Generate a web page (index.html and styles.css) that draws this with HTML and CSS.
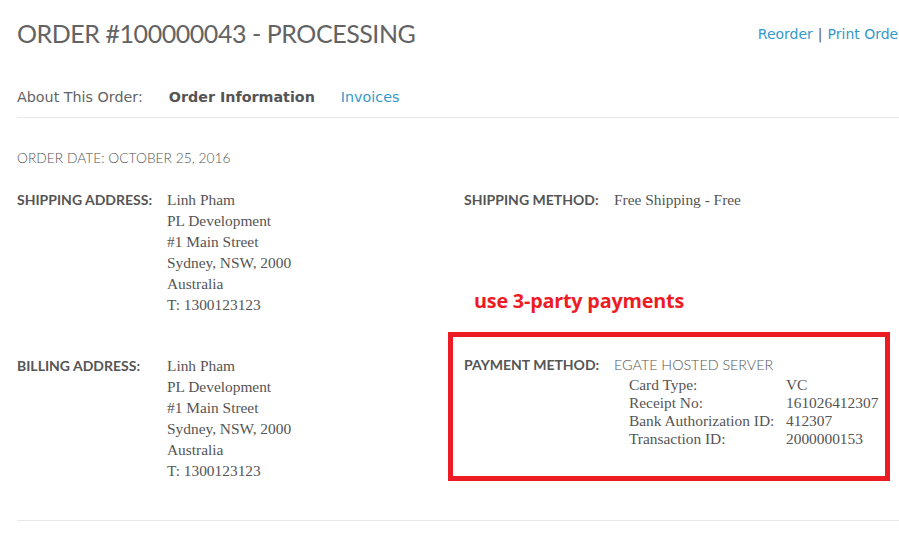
FILE: index.html
```html
<!DOCTYPE html>
<html>
<head>
<meta charset="utf-8">
<link rel="stylesheet" href="styles.css">
</head>
<body>
<div class="page">
  <div class="title-row">
    <h1 class="title">ORDER #100000043 - PROCESSING</h1>
    <div class="actions"><a class="link">Reorder</a><span class="sep">|</span><a class="link">Print Order</a></div>
  </div>
  <div class="tabs">
    <span class="tab-label">About This Order:</span>
    <span class="tab-current">Order Information</span>
    <a class="link tab-link">Invoices</a>
  </div>
  <div class="order-date">ORDER DATE: OCTOBER 25, 2016</div>
  <div class="row row-first">
    <div class="col">
      <div class="label">SHIPPING ADDRESS:</div>
      <address class="value">Linh Pham<br>PL Development<br>#1 Main Street<br>Sydney, NSW, 2000<br>Australia<br>T: 1300123123</address>
    </div>
    <div class="col col-right">
      <div class="pair">
        <div class="label">SHIPPING METHOD:</div>
        <div class="value">Free Shipping - Free</div>
      </div>
      <div class="note">use 3-party payments</div>
    </div>
  </div>
  <div class="row row-second">
    <div class="col col-billing">
      <div class="label">BILLING ADDRESS:</div>
      <address class="value">Linh Pham<br>PL Development<br>#1 Main Street<br>Sydney, NSW, 2000<br>Australia<br>T: 1300123123</address>
    </div>
    <div class="col col-right">
      <div class="payment-box">
        <div class="label">PAYMENT METHOD:</div>
        <div class="payment">
          <div class="method">EGATE HOSTED SERVER</div>
          <table class="details">
            <tr><th>Card Type:</th><td>VC</td></tr>
            <tr><th>Receipt No:</th><td>161026412307</td></tr>
            <tr><th>Bank Authorization ID:</th><td>412307</td></tr>
            <tr><th>Transaction ID:</th><td>2000000153</td></tr>
          </table>
        </div>
      </div>
    </div>
  </div>
  <div class="bottom-rule"></div>
</div>
</body>
</html>
```
FILE: styles.css
```css
html, body {
  margin: 0;
  padding: 0;
  background: #fff;
  overflow: hidden;
}
.page {
  width: 892px;
  margin-left: 17px;
  color: #636363;
}
.title-row {
  display: flex;
  justify-content: space-between;
  align-items: flex-start;
  padding-top: 16px;
}
.title {
  margin: 0;
  font-family: "Lato", sans-serif;
  font-weight: 400;
  font-size: 25px;
  line-height: 34px;
  color: #636363;
  letter-spacing: -0.45px;
}
.actions {
  margin-top: 8px;
  margin-right: 5px;
  font-family: "DejaVu Sans", Verdana, sans-serif;
  font-size: 14px;
  line-height: 20px;
  white-space: nowrap;
}
.link {
  color: #3399cc;
  text-decoration: none;
}
.sep {
  color: #636363;
  margin: 0 5px;
}
.tabs {
  margin-top: 37px;
  font-family: "DejaVu Sans", Verdana, sans-serif;
  font-size: 14.3px;
  line-height: 20px;
  padding-bottom: 10px;
  border-bottom: 1px solid #e6e6e6;
  display: flex;
  gap: 26px;
}
.tab-current {
  font-weight: bold;
  color: #555;
}
.order-date {
  margin-top: 31px;
  font-family: "Lato", sans-serif;
  font-weight: 300;
  font-size: 13.8px;
  line-height: 18px;
  color: #555;
}
.row {
  display: flex;
}
.row-first {
  margin-top: 22px;
}
.col {
  width: 447px;
  flex: none;
  display: flex;
  align-items: flex-start;
}
.col-right {
  flex-direction: column;
}
.pair {
  display: flex;
}
.label {
  width: 150px;
  flex: none;
  font-family: "Lato", sans-serif;
  font-weight: 700;
  font-size: 14px;
  line-height: 21px;
  color: #555;
}
.value {
  font-family: "Liberation Serif", serif;
  font-style: normal;
  font-size: 15.4px;
  line-height: 21px;
  color: #555;
}
.note {
  margin-top: 78px;
  margin-left: 10px;
  font-family: "Open Sans", sans-serif;
  font-weight: 700;
  font-size: 19.8px;
  line-height: 26px;
  letter-spacing: -0.2px;
  color: #ed1c24;
}
.row-second {
  margin-top: 17px;
}
.col-billing {
  margin-top: 23px;
}
.payment-box {
  box-sizing: border-box;
  display: flex;
  margin-left: -16px;
  width: 442px;
  border: 5px solid #ed1c24;
  padding: 17px 0 28px 11px;
}
.method {
  font-family: "Lato", sans-serif;
  font-weight: 300;
  font-size: 14.3px;
  line-height: 22px;
  color: #555;
}
.details {
  border-collapse: collapse;
  margin-left: 15px;
  font-family: "Liberation Serif", serif;
  font-size: 15.4px;
  color: #555;
}
.details th, .details td {
  padding: 0;
  line-height: 18px;
  text-align: left;
  font-weight: normal;
  vertical-align: top;
}
.details th {
  width: 157px;
}
.bottom-rule {
  margin-top: 39px;
  border-top: 1px solid #e6e6e6;
}
```
